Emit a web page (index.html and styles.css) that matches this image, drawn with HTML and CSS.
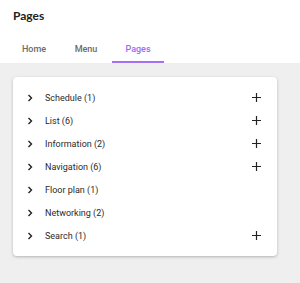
FILE: index.html
```html
<!DOCTYPE html>
<html lang="en">
<head>
    <meta charset="UTF-8">
    <meta name="viewport" content="width=device-width, initial-scale=1.0">
    <title>Pages</title>
    <link rel="stylesheet" href="styles.css">
</head>
<body>
    <header class="top">
        <h1 class="title">Pages</h1>
        <nav class="tabs">
            <a class="tab">Home</a>
            <a class="tab">Menu</a>
            <a class="tab active">Pages</a>
        </nav>
    </header>

    <!-- page groups -->
    <main class="content">
        <div class="card">
            <div class="row">
                <svg class="chev" viewBox="0 0 6 8"><polyline points="1.5,1 4.5,4 1.5,7"/></svg>
                <span class="label">Schedule (1)</span>
                <svg class="plus" viewBox="0 0 9 9"><path d="M4.5 0V9M0 4.5H9"/></svg>
            </div>
            <div class="row">
                <svg class="chev" viewBox="0 0 6 8"><polyline points="1.5,1 4.5,4 1.5,7"/></svg>
                <span class="label">List (6)</span>
                <svg class="plus" viewBox="0 0 9 9"><path d="M4.5 0V9M0 4.5H9"/></svg>
            </div>
            <div class="row">
                <svg class="chev" viewBox="0 0 6 8"><polyline points="1.5,1 4.5,4 1.5,7"/></svg>
                <span class="label">Information (2)</span>
                <svg class="plus" viewBox="0 0 9 9"><path d="M4.5 0V9M0 4.5H9"/></svg>
            </div>
            <div class="row">
                <svg class="chev" viewBox="0 0 6 8"><polyline points="1.5,1 4.5,4 1.5,7"/></svg>
                <span class="label">Navigation (6)</span>
                <svg class="plus" viewBox="0 0 9 9"><path d="M4.5 0V9M0 4.5H9"/></svg>
            </div>
            <div class="row">
                <svg class="chev" viewBox="0 0 6 8"><polyline points="1.5,1 4.5,4 1.5,7"/></svg>
                <span class="label">Floor plan (1)</span>
            </div>
            <div class="row">
                <svg class="chev" viewBox="0 0 6 8"><polyline points="1.5,1 4.5,4 1.5,7"/></svg>
                <span class="label">Networking (2)</span>
            </div>
            <div class="row">
                <svg class="chev" viewBox="0 0 6 8"><polyline points="1.5,1 4.5,4 1.5,7"/></svg>
                <span class="label">Search (1)</span>
                <svg class="plus" viewBox="0 0 9 9"><path d="M4.5 0V9M0 4.5H9"/></svg>
            </div>
        </div>
    </main>
</body>
</html>
```

FILE: styles.css
```css
body { margin: 0; font-family: Roboto, "Liberation Sans", sans-serif; color: #333; background: #fff; }
.top { background: #fff; }
.title { margin: 0; padding: 8px 13px 0; font-family: Lato, "Open Sans", sans-serif; font-size: 12px; line-height: 16px; font-weight: 700; color: #222; }
.tabs { display: flex; padding-left: 8px; margin-top: 13px; }
.tab { width: 52px; height: 24px; display: flex; align-items: center; justify-content: center; font-size: 9px; font-weight: 500; color: #6b6b6b; border-bottom: 2px solid transparent; }
.tab.active { color: #9c6bf2; border-bottom-color: #a172f4; }
.content { background: #efefef; padding: 14px 0 0 13px; min-height: calc(100vh - 77px); }
.card { width: 264px; background: #fff; border-radius: 4px; box-shadow: 0 1px 3px rgba(0, 0, 0, 0.25); padding: 9px 0; }
.row { display: flex; align-items: center; height: 23px; padding: 0 16px 0 14px; }
.chev { width: 6px; height: 8px; fill: none; stroke: #222; stroke-width: 1.4; }
.label { margin-left: 12px; font-size: 9px; color: #2a2a2a; }
.plus { width: 9px; height: 9px; margin-left: auto; stroke: #222; stroke-width: 1.2; }
```
